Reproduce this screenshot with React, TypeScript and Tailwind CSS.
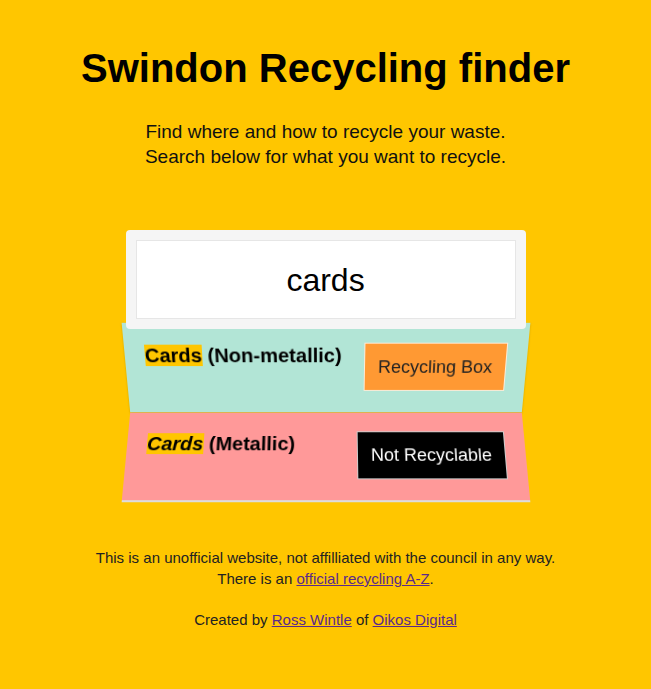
import React from "react"

const results = [
  {
    name: "(Non-metallic)",
    bin: "Recycling Box",
    italic: false,
    card: "bg-[#b2e5d6] [transform:perspective(600px)_rotateX(-16deg)] shadow-[0_1px_2px_rgba(120,100,0,0.35)]",
    label: "bg-[#ff9933] text-[#222]",
  },
  {
    name: "(Metallic)",
    bin: "Not Recyclable",
    italic: true,
    card: "-mt-[5px] bg-[#ff9999] [transform:perspective(600px)_rotateX(16deg)] border-b-2 border-[#dddddd]",
    label: "bg-black text-white border-[#cccccc]",
  },
]

export default function App() {
  return (
    <div className="min-h-screen bg-[#ffc600] text-center text-black font-['Liberation_Sans',Arial,sans-serif]">
      <h1 className="pt-[44px] text-[40px] font-bold leading-[48px]">Swindon Recycling finder</h1>
      <p className="mt-[27px] text-[19px] leading-[25px] text-[#111]">
        Find where and how to recycle your waste.
        <br />
        Search below for what you want to recycle.
      </p>

      <div className="mx-auto mt-[61px] w-[400px]">
        <div className="relative z-10 rounded-[4px] bg-[#f5f5f5] p-[10px]">
          <div className="flex h-[79px] items-center justify-center border border-[#e6e6e6] bg-white text-[32px]">
            cards
          </div>
        </div>

        <div className="-mt-[7px]">
          {results.map((r) => (
            <div
              key={r.name}
              className={`flex h-[93px] items-start justify-between px-5 pt-5 text-left ${r.card}`}
            >
              <div className="text-[20px] font-bold leading-[26px]">
                <span className={`bg-[#ffc600] ${r.italic ? "italic" : ""}`}>Cards</span> {r.name}
              </div>
              <div className={`border px-[13px] py-[13px] text-[18px] leading-[22px] ${r.label} border-white/80`}>
                {r.bin}
              </div>
            </div>
          ))}
        </div>
      </div>

      <div className="mt-[44px] text-[15px] leading-[21px] text-[#222]">
        <p>
          This is an unofficial website, not affilliated with the council in any way.
          <br />
          There is an{" "}
          <a href="#" className="text-[#5a2a8a] underline">
            official recycling A-Z
          </a>
          .
        </p>
        <p className="mt-[20px]">
          Created by{" "}
          <a href="#" className="text-[#5a2a8a] underline">
            Ross Wintle
          </a>{" "}
          of{" "}
          <a href="#" className="text-[#5a2a8a] underline">
            Oikos Digital
          </a>
        </p>
      </div>
    </div>
  )
}
